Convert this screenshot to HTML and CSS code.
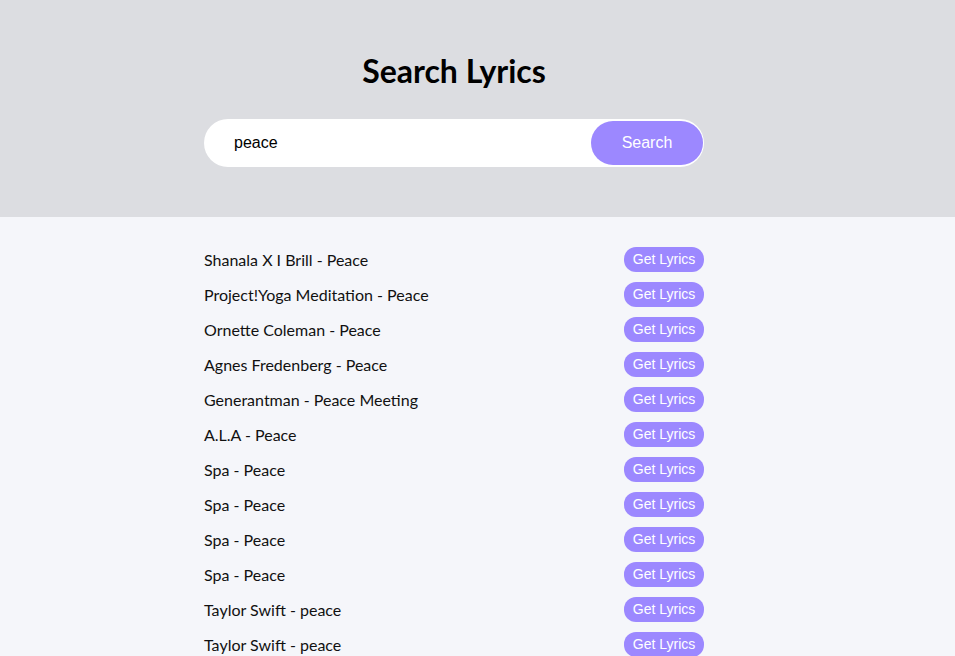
FILE: index.html
```html
<!DOCTYPE html>
<html lang="en">
<head>
<meta charset="UTF-8">
<title>Search Lyrics</title>
<link rel="stylesheet" href="styles.css">
</head>
<body>
<header class="header">
  <h1 class="title">Search Lyrics</h1>
  <form class="search-form">
    <input class="search-input" type="text" value="peace" autofocus>
    <button class="search-btn" type="button">Search</button>
  </form>
</header>
<main class="container">
  <ul class="songs">
    <li class="song"><span class="song-name">Shanala X I Brill - Peace</span><button class="btn" type="button">Get Lyrics</button></li>
    <li class="song"><span class="song-name">Project!Yoga Meditation - Peace</span><button class="btn" type="button">Get Lyrics</button></li>
    <li class="song"><span class="song-name">Ornette Coleman - Peace</span><button class="btn" type="button">Get Lyrics</button></li>
    <li class="song"><span class="song-name">Agnes Fredenberg - Peace</span><button class="btn" type="button">Get Lyrics</button></li>
    <li class="song"><span class="song-name">Generantman - Peace Meeting</span><button class="btn" type="button">Get Lyrics</button></li>
    <li class="song"><span class="song-name">A.L.A - Peace</span><button class="btn" type="button">Get Lyrics</button></li>
    <li class="song"><span class="song-name">Spa - Peace</span><button class="btn" type="button">Get Lyrics</button></li>
    <li class="song"><span class="song-name">Spa - Peace</span><button class="btn" type="button">Get Lyrics</button></li>
    <li class="song"><span class="song-name">Spa - Peace</span><button class="btn" type="button">Get Lyrics</button></li>
    <li class="song"><span class="song-name">Spa - Peace</span><button class="btn" type="button">Get Lyrics</button></li>
    <li class="song"><span class="song-name">Taylor Swift - peace</span><button class="btn" type="button">Get Lyrics</button></li>
    <li class="song"><span class="song-name">Taylor Swift - peace</span><button class="btn" type="button">Get Lyrics</button></li>
  </ul>
</main>
</body>
</html>
```
FILE: styles.css
```css
* { box-sizing: border-box; }

body {
  margin: 0;
  background-color: #f5f6fa;
  font-family: Lato, "Liberation Sans", sans-serif;
  color: #111;
}

.header {
  background-color: #dcdde1;
  display: flex;
  flex-direction: column;
  align-items: center;
  padding: 52px 47px 50px 0;
}

.title {
  margin: 0 0 29px;
  font-size: 32px;
  font-weight: 700;
  line-height: 38px;
  color: #000;
}

.search-form {
  position: relative;
  width: 500px;
}

.search-input {
  display: block;
  width: 100%;
  border: 0;
  border-radius: 50px;
  background: #fff;
  font-family: "Liberation Sans", Arial, sans-serif;
  font-size: 16px;
  line-height: 18px;
  padding: 15px 30px;
  color: #000;
  outline: none;
  caret-color: #000;
}

.search-btn {
  position: absolute;
  top: 2px;
  right: 1px;
  background-color: #9c88ff;
  border: 0;
  border-radius: 50px;
  color: #fff;
  font-family: "Liberation Sans", Arial, sans-serif;
  font-size: 16px;
  line-height: 18px;
  padding: 13px 30px;
  width: 112px;
}

.container {
  width: 500px;
  margin: 30px 0 0 204px;
}

.songs {
  list-style: none;
  margin: 0;
  padding: 0;
  display: flex;
  flex-direction: column;
  gap: 10px;
}

.song {
  display: flex;
  align-items: center;
  justify-content: space-between;
  height: 25px;
}

.song-name {
  font-size: 16px;
  color: #111;
}

.btn {
  background-color: #9c88ff;
  border: 0;
  border-radius: 12px;
  color: #fff;
  font-family: "Liberation Sans", Arial, sans-serif;
  font-size: 14px;
  line-height: 17px;
  padding: 4px 0;
  width: 80px;
  height: 25px;
}
```
